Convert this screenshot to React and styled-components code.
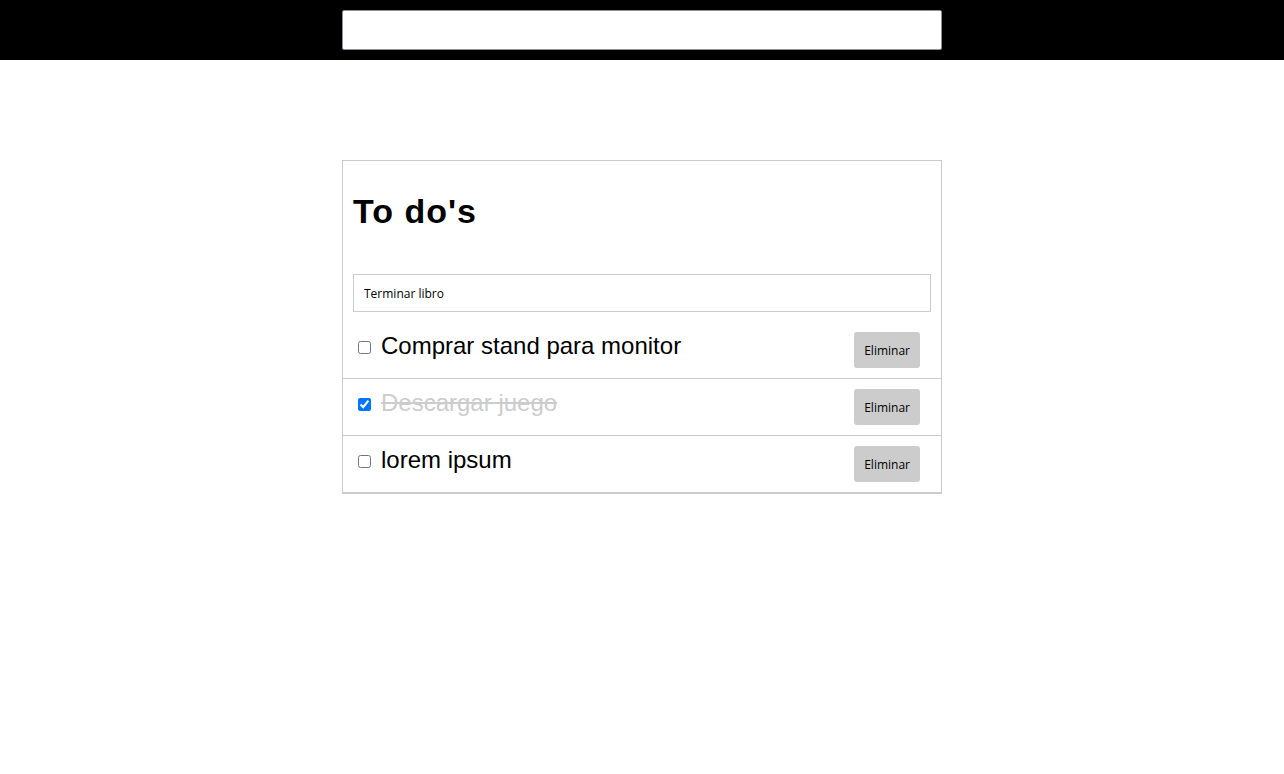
import React, { useState } from "react";
import styled, { createGlobalStyle } from "styled-components";

const GlobalStyle = createGlobalStyle`
  body {
    margin: 0;
    background: #ffffff;
    font-family: "Liberation Sans", Arial, sans-serif;
  }
  * {
    box-sizing: border-box;
  }
`;

const initialTodos = [
  { id: 1, text: "Comprar stand para monitor", done: false },
  { id: 2, text: "Descargar juego", done: true },
  { id: 3, text: "lorem ipsum", done: false },
];

// Top bar
const TopBar = styled.header`
  height: 60px;
  background: #000;
  display: flex;
  justify-content: center;
  padding-top: 10px;
`;

const SearchInput = styled.input`
  width: 600px;
  height: 40px;
  border: 1px solid #8f8f9d;
  border-radius: 2px;
  background: #fff;
  outline: none;
`;

// Card
const Card = styled.section`
  width: 600px;
  margin: 100px auto 0;
  border: 1px solid #ccc;
`;

const CardHead = styled.div`
  padding: 10px;
`;

const Title = styled.h1`
  font-family: "Liberation Sans", Arial, sans-serif;
  font-size: 34px;
  font-weight: bold;
  letter-spacing: 1px;
  line-height: 37px;
  margin: 22px 0 44px;
  color: #000;
`;

const NewTodo = styled.input`
  display: block;
  width: 100%;
  height: 38px;
  padding: 0 10px;
  border: 1px solid #ccc;
  font-family: "Open Sans", "Noto Sans", sans-serif;
  font-size: 12px;
  color: #000;
  outline: none;
`;

const List = styled.ul`
  list-style: none;
  margin: 0;
  padding: 0;
`;

const Row = styled.li`
  display: flex;
  justify-content: space-between;
  align-items: flex-start;
  padding: 10px 21px 10px 10px;
  border-bottom: 1px solid #ccc;
`;

const Label = styled.label`
  display: flex;
  align-items: baseline;
  font-size: 24px;
  line-height: 28px;
`;

const Check = styled.input`
  width: 13px;
  height: 13px;
  margin: 0 10px -1px 5px;
`;

const TodoText = styled.span`
  font-family: "Liberation Sans", Arial, sans-serif;
  color: ${(p) => (p.$done ? "#ccc" : "#000")};
  text-decoration: ${(p) => (p.$done ? "line-through" : "none")};
`;

const DeleteButton = styled.button`
  height: 36px;
  padding: 0 10px;
  border: none;
  border-radius: 3px;
  background: #ccc;
  color: #000;
  font-family: "Open Sans", "Noto Sans", sans-serif;
  font-size: 12px;
  cursor: pointer;
`;

const App = () => {
  const [todos, setTodos] = useState(initialTodos);
  const [draft, setDraft] = useState("Terminar libro");

  const toggle = (id) =>
    setTodos(todos.map((t) => (t.id === id ? { ...t, done: !t.done } : t)));
  const remove = (id) => setTodos(todos.filter((t) => t.id !== id));

  return (
    <>
      <GlobalStyle />
      <TopBar>
        <SearchInput type="text" />
      </TopBar>
      <Card>
        <CardHead>
          <Title>To do's</Title>
          <NewTodo value={draft} onChange={(e) => setDraft(e.target.value)} />
        </CardHead>
        <List>
          {todos.map((todo) => (
            <Row key={todo.id}>
              <Label>
                <Check
                  type="checkbox"
                  checked={todo.done}
                  onChange={() => toggle(todo.id)}
                />
                <TodoText $done={todo.done}>{todo.text}</TodoText>
              </Label>
              <DeleteButton onClick={() => remove(todo.id)}>Eliminar</DeleteButton>
            </Row>
          ))}
        </List>
      </Card>
    </>
  );
};

export default App;
